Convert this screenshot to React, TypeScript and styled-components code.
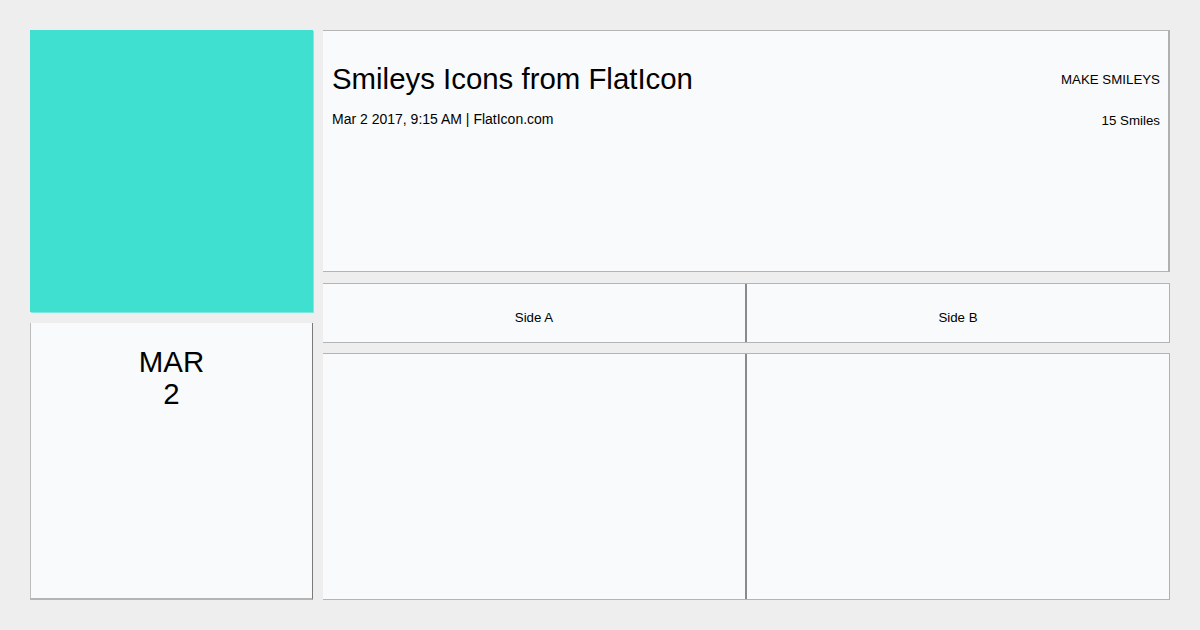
import React from "react";
import styled, { createGlobalStyle } from "styled-components";

const Global = createGlobalStyle`
  html, body { margin: 0; padding: 0; background: #eeeeee; }
  body { font-family: "Liberation Sans", Arial, sans-serif; color: #000; }
`;

const Page = styled.div`
  box-sizing: border-box;
  width: 1200px;
  height: 630px;
  padding: 30px;
  display: grid;
  grid-template-columns: 282px 847px;
  column-gap: 11px;
`;

const LeftCol = styled.div`
  display: grid;
  grid-template-rows: 282px 277px;
  row-gap: 11px;
`;

const Swatch = styled.div`
  background: #40e0d0;
  box-shadow: 1px 1px 0 #7fe9de;
`;

const DateCard = styled.div`
  box-sizing: border-box;
  background: #f9fafc;
  border-left: 1px solid #bdbdbd;
  border-right: 1px solid #7a7a7a;
  border-bottom: 2px solid #b4b4b4;
  padding-top: 23px;
  text-align: center;
  font-size: 29.4px;
  line-height: 32px;
  width: 283px;
`;

const RightCol = styled.div`
  display: flex;
  flex-direction: column;
`;

const Header = styled.div`
  box-sizing: border-box;
  background: #f9fafc;
  border-top: 1px solid #b4b4b4;
  border-right: 2px solid #b0b0b0;
  border-bottom: 1px solid #b4b4b4;
  padding: 32px 8px 0 9px;
  display: flex;
  justify-content: space-between;
  margin-bottom: 11px;
  height: 242px;
  flex: none;
`;

const HeadMain = styled.div`
  display: flex;
  flex-direction: column;
`;

const Title = styled.h1`
  margin: 0;
  font-weight: normal;
  font-size: 29.4px;
  line-height: 32px;
`;

const Meta = styled.div`
  margin-top: 16px;
  font-size: 14px;
  line-height: 16px;
`;

const HeadSide = styled.div`
  display: flex;
  flex-direction: column;
  align-items: flex-end;
  font-size: 13.3px;
  line-height: 15px;
  padding-top: 9px;
  gap: 26px;
`;

const Row = styled.div<{ $h: number; $gap: number }>`
  flex: none;
  display: grid;
  grid-template-columns: 424px 1fr;
  height: ${(p) => p.$h}px;
  margin-bottom: ${(p) => p.$gap}px;
  box-sizing: border-box;
  background: #f9fafc;
  border-top: 1px solid #b4b4b4;
  border-bottom: 1px solid #b4b4b4;
  border-right: 1px solid #b0b0b0;
`;

const Cell = styled.div<{ $divider?: boolean }>`
  box-sizing: border-box;
  text-align: center;
  font-size: 13.3px;
  line-height: 15px;
  padding-top: 26px;
  border-right: ${(p) => (p.$divider ? "2px solid #8a8a8a" : "none")};
`;

export default function App() {
  return (
    <>
      <Global />
      <Page>
        <LeftCol>
          <Swatch />
          <DateCard>
            MAR
            <br />2
          </DateCard>
        </LeftCol>
        <RightCol>
          <Header>
            <HeadMain>
              <Title>Smileys Icons from FlatIcon</Title>
              <Meta>Mar 2 2017, 9:15 AM | FlatIcon.com</Meta>
            </HeadMain>
            <HeadSide>
              <span>MAKE SMILEYS</span>
              <span>15 Smiles</span>
            </HeadSide>
          </Header>
          <Row $h={60} $gap={10}>
            <Cell $divider>Side A</Cell>
            <Cell>Side B</Cell>
          </Row>
          <Row $h={247} $gap={0}>
            <Cell $divider />
            <Cell />
          </Row>
        </RightCol>
      </Page>
    </>
  );
}
